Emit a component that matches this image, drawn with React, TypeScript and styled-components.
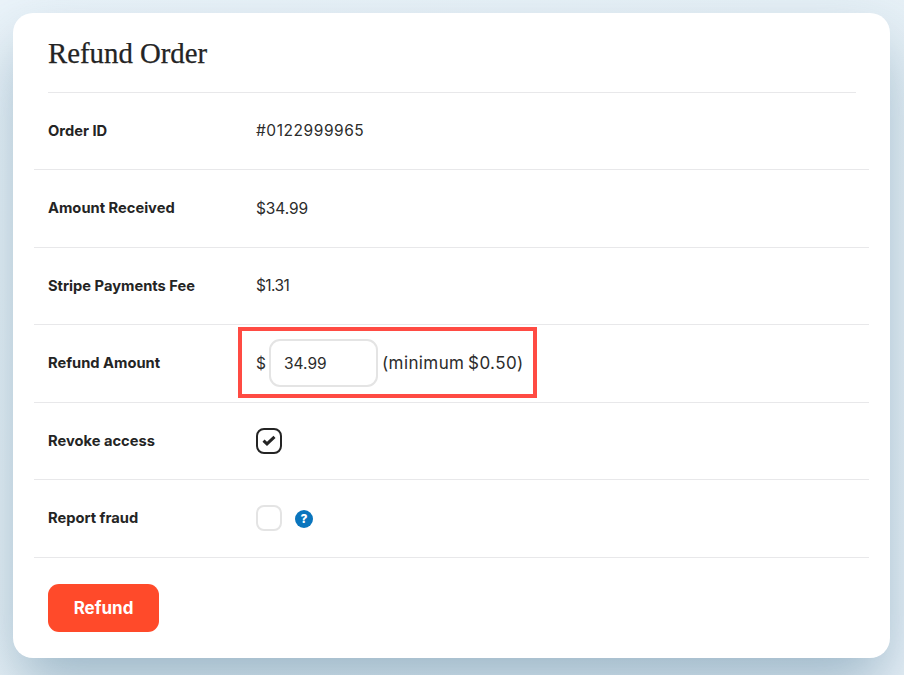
import React from "react";
import styled, { createGlobalStyle } from "styled-components";

const GlobalStyle = createGlobalStyle`
  html, body {
    margin: 0;
    padding: 0;
    height: 100%;
  }
  body {
    font-family: "Inter", "Liberation Sans", sans-serif;
    color: #242424;
    overflow: hidden;
  }
`;

const rows = [
  { label: "Order ID", value: "#0122999965", tracking: 0.55 },
  { label: "Amount Received", value: "$34.99", tracking: -0.1 },
  { label: "Stripe Payments Fee", value: "$1.31", tracking: -0.6 },
];

export default function App() {
  return (
    <Page>
      <GlobalStyle />
      <Card>
        <Header>
          <Title>Refund Order</Title>
        </Header>
        {rows.map((row) => (
          <Row key={row.label}>
            <Label>{row.label}</Label>
            <Value $tracking={row.tracking}>{row.value}</Value>
          </Row>
        ))}
        <Row>
          <Label>Refund Amount</Label>
          <AmountGroup>
            <Highlight />
            <Currency>$</Currency>
            <AmountInput defaultValue="34.99" />
            <Note>(minimum $0.50)</Note>
          </AmountGroup>
        </Row>
        <Row>
          <Label>Revoke access</Label>
          <Checkbox $checked>
            <svg width="14" height="11" viewBox="0 0 14 11" fill="none">
              <path
                d="M1.5 5.6 5 8.9 12.5 1.9"
                stroke="#242424"
                strokeWidth="3"
              />
            </svg>
          </Checkbox>
        </Row>
        <Row>
          <Label>Report fraud</Label>
          <Checkbox />
          <HelpIcon>?</HelpIcon>
        </Row>
        <Footer>
          <RefundButton>Refund</RefundButton>
        </Footer>
      </Card>
    </Page>
  );
}

const Page = styled.div`
  box-sizing: border-box;
  width: 904px;
  height: 675px;
  padding: 13px 14px 17px 13px;
  background: linear-gradient(135deg, #eaf3f9 0%, #e6f0f6 50%, #e8f1f8 100%);
  overflow: hidden;
`;

const Card = styled.div`
  box-sizing: border-box;
  width: 877px;
  height: 645px;
  padding: 0 21px;
  background: #fff;
  border-radius: 20px;
  box-shadow: 0 30px 60px -4px rgba(95, 135, 160, 0.55);
`;

const Header = styled.div`
  box-sizing: border-box;
  height: 79.5px;
  margin: 0 13px 0 14px;
  padding-top: 24px;
  border-bottom: 1px solid #e8e8ea;
`;

const Title = styled.h1`
  margin: 0;
  font-family: "Liberation Serif", serif;
  font-size: 28.8px;
  line-height: 32px;
  font-weight: 400;
  color: #242424;
  -webkit-text-stroke: 0.25px #242424;
`;

const Row = styled.div`
  box-sizing: border-box;
  display: flex;
  align-items: center;
  height: 77.5px;
  padding-left: 14px;
  border-bottom: 1px solid #e8e8ea;
`;

const Label = styled.div`
  width: 208px;
  flex: none;
  margin-bottom: 0.5px;
  font-size: 14.7px;
  font-weight: 700;
  color: #242424;
`;

const Value = styled.span<{ $tracking?: number }>`
  font-size: 15.5px;
  letter-spacing: ${(p) => p.$tracking ?? 0}px;
  color: #2c2c2c;
`;

const Currency = styled.span`
  width: 9px;
  font-size: 15.5px;
  color: #2c2c2c;
`;

const Note = styled.span`
  font-size: 17px;
  letter-spacing: 0.4px;
  word-spacing: -1.5px;
  white-space: nowrap;
  color: #2c2c2c;
`;

const AmountGroup = styled.div`
  position: relative;
  display: flex;
  align-items: center;
  gap: 4px;
`;

const Highlight = styled.div`
  position: absolute;
  left: -18px;
  right: -13px;
  top: -12px;
  bottom: -11px;
  border: 4.5px solid #ff4b43;
  pointer-events: none;
`;

const AmountInput = styled.input`
  box-sizing: border-box;
  width: 109px;
  height: 48px;
  padding: 0 13px;
  border: 2px solid #e4e4e4;
  border-radius: 11px;
  background: #fff;
  font-family: inherit;
  font-size: 15.5px;
  color: #2c2c2c;
  outline: none;
`;

const Checkbox = styled.div<{ $checked?: boolean }>`
  box-sizing: border-box;
  display: flex;
  align-items: center;
  justify-content: center;
  width: 26px;
  height: 26px;
  border: 2px solid ${(p) => (p.$checked ? "#242424" : "#e4e4e4")};
  border-radius: 8px;
`;

const HelpIcon = styled.div`
  display: flex;
  align-items: center;
  justify-content: center;
  width: 18px;
  height: 18px;
  margin: 1px 0 0 13px;
  border-radius: 50%;
  background: #0a75bd;
  color: #fff;
  font-size: 12px;
  font-weight: 800;
`;

const Footer = styled.div`
  padding: 26px 14px 0;
`;

const RefundButton = styled.button`
  display: block;
  width: 111px;
  height: 48px;
  border: none;
  border-radius: 11px;
  background: #ff4a2a;
  color: #fff;
  font-family: inherit;
  font-size: 17px;
  font-weight: 700;
`;
